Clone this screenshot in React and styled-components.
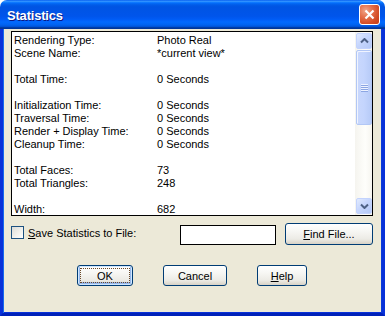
import React from 'react';
import styled, { createGlobalStyle } from 'styled-components';

const GlobalStyle = createGlobalStyle`
  html, body {
    margin: 0;
    padding: 0;
    background: #ffffff;
  }
  body {
    font-family: "Liberation Sans", Arial, sans-serif;
    font-size: 11px;
    color: #000;
  }
`;

const Window = styled.div`
  width: 385px;
  height: 316px;
  display: flex;
  flex-direction: column;
  box-sizing: border-box;
`;

const TitleBar = styled.div`
  height: 29px;
  flex: none;
  display: flex;
  align-items: center;
  justify-content: space-between;
  padding: 0 5px 1px 7px;
  box-sizing: border-box;
  border-radius: 7px 7px 0 0;
  background: linear-gradient(
    180deg,
    #0058ee 0%,
    #3593ff 4%,
    #288eff 6%,
    #127dff 8%,
    #036ffc 10%,
    #0262ee 14%,
    #0057e5 20%,
    #0054e3 24%,
    #0055eb 56%,
    #005bf5 66%,
    #026afe 76%,
    #0062ef 86%,
    #0052d6 92%,
    #0040ab 94%,
    #003092 100%
  );
`;

const Title = styled.span`
  color: #fff;
  font-weight: bold;
  font-size: 13px;
  letter-spacing: -0.2px;
  margin-top: 2px;
  text-shadow: 1px 1px 0 #0a1883;
`;

const CloseButton = styled.div`
  width: 21px;
  height: 21px;
  box-sizing: border-box;
  border: 1px solid #fff;
  border-radius: 3px;
  display: flex;
  align-items: center;
  justify-content: center;
  background: radial-gradient(circle at 30% 30%, #f0a78b 0%, #e5714d 35%, #d24c25 70%, #c33c17 100%);
`;

const Body = styled.div`
  flex: 1;
  display: flex;
  flex-direction: column;
  background: #ece9d8;
  border-left: 3px solid #0831d9;
  border-right: 3px solid #0831d9;
  border-bottom: 3px solid #0021b9;
  box-shadow: inset 1px 0 0 #166aee, inset -1px 0 0 #0a3bd8, inset 0 -1px 0 #0831d9;
  padding: 2px 9px 0 8px;
`;

const ListBox = styled.div`
  height: 185px;
  box-sizing: border-box;
  border: 1px solid #000;
  background: #fff;
  display: flex;
  overflow: hidden;
`;

const ListContent = styled.div`
  flex: 1;
  padding: 2px 0 0 2px;
  overflow: hidden;
`;

const Row = styled.div`
  display: grid;
  grid-template-columns: 143px 1fr;
  height: 13px;
  line-height: 13px;
  white-space: nowrap;
`;

const ScrollBar = styled.div`
  width: 17px;
  flex: none;
  display: flex;
  flex-direction: column;
  background: linear-gradient(90deg, #f5f4ef 0%, #fefefb 60%, #f6f5f0 100%);
  padding: 1px 0;
  box-sizing: border-box;
`;

const ArrowButton = styled.div`
  width: 16px;
  height: 16px;
  margin-left: 1px;
  box-sizing: border-box;
  border: 1px solid #c3d3fd;
  border-radius: 2px;
  background: linear-gradient(135deg, #e2ebfe 0%, #c6d6fd 45%, #b4c9f6 100%);
  display: flex;
  align-items: center;
  justify-content: center;
  flex: none;
`;

const Track = styled.div`
  flex: 1;
  display: flex;
  flex-direction: column;
  padding: 1px 0;
`;

const Thumb = styled.div`
  height: 75px;
  width: 16px;
  margin-left: 1px;
  box-sizing: border-box;
  border: 1px solid #b2c7f5;
  border-radius: 2px;
  background: linear-gradient(90deg, #c9d8fc 0%, #c4d5fd 50%, #b7cbf7 100%);
  box-shadow: inset 1px 1px 0 #f0f4ff;
  display: flex;
  align-items: center;
  justify-content: center;
`;

const Grip = styled.div`
  width: 7px;
  height: 8px;
  background: repeating-linear-gradient(180deg, #eef3ff 0 1px, #8ca6e3 1px 2px);
`;

const FileRow = styled.div`
  display: flex;
  align-items: center;
  gap: 9px;
  margin-top: 7px;
  height: 22px;
`;

const CheckLabel = styled.label`
  flex: 1;
  display: flex;
  align-items: center;
  gap: 4px;
  align-self: flex-start;
  margin-top: 3px;
`;

const CheckBox = styled.span`
  width: 13px;
  height: 13px;
  box-sizing: border-box;
  border: 1px solid #1c5180;
  background: linear-gradient(135deg, #dcdcd7 0%, #f2f2ee 60%, #ffffff 100%);
`;

const TextBox = styled.div`
  width: 96px;
  height: 20px;
  box-sizing: border-box;
  border: 1px solid #000;
  background: #fff;
  margin-top: 2px;
`;

const Button = styled.div`
  position: relative;
  width: ${p => p.$w}px;
  height: ${p => p.$h || 21}px;
  box-sizing: border-box;
  border: 1px solid #003c74;
  border-radius: 3px;
  display: flex;
  align-items: center;
  justify-content: center;
  background: linear-gradient(180deg, #ffffff 0%, #f7f7f4 35%, #ecebe5 75%, #d8d2c6 100%);
  box-shadow: ${p => p.$default ? 'inset 0 0 0 1px #cee7ff, inset 0 -1px 0 2px #98b8ea' : 'none'};
  flex: none;

  &::after {
    content: '';
    display: ${p => p.$focus ? 'block' : 'none'};
    position: absolute;
    inset: 2px;
    border: 1px dotted #6b4a2a;
  }
`;

const ButtonRow = styled.div`
  display: flex;
  gap: 30px;
  margin-top: 20px;
  padding-left: 66px;
`;

const U = styled.span`
  text-decoration: underline;
`;

const stats = [
  ['Rendering Type:', 'Photo Real'],
  ['Scene Name:', '*current view*'],
  ['', ''],
  ['Total Time:', '0 Seconds'],
  ['', ''],
  ['Initialization Time:', '0 Seconds'],
  ['Traversal Time:', '0 Seconds'],
  ['Render + Display Time:', '0 Seconds'],
  ['Cleanup Time:', '0 Seconds'],
  ['', ''],
  ['Total Faces:', '73'],
  ['Total Triangles:', '248'],
  ['', ''],
  ['Width:', '682'],
];

const Chevron = ({ down }) => (
  <svg width="9" height="6" viewBox="0 0 9 6">
    <path
      d={down ? 'M1 1.5 L4.5 5 L8 1.5' : 'M1 4.5 L4.5 1 L8 4.5'}
      fill="none"
      stroke="#4d6185"
      strokeWidth="2"
    />
  </svg>
);

const App = () => (
  <>
    <GlobalStyle />
    <Window>
      <TitleBar>
        <Title>Statistics</Title>
        <CloseButton>
          <svg width="13" height="13" viewBox="0 0 13 13">
            <path d="M2.5 2.5 L10.5 10.5 M10.5 2.5 L2.5 10.5" stroke="#fff" strokeWidth="2.2" />
          </svg>
        </CloseButton>
      </TitleBar>
      <Body>
        <ListBox>
          <ListContent>
            {stats.map(([label, value], i) => (
              <Row key={i}>
                <span>{label}</span>
                <span>{value}</span>
              </Row>
            ))}
          </ListContent>
          <ScrollBar>
            <ArrowButton><Chevron /></ArrowButton>
            <Track>
              <Thumb><Grip /></Thumb>
            </Track>
            <ArrowButton><Chevron down /></ArrowButton>
          </ScrollBar>
        </ListBox>
        <FileRow>
          <CheckLabel>
            <CheckBox />
            <span><U>S</U>ave Statistics to File:</span>
          </CheckLabel>
          <TextBox />
          <Button $w={88} $h={22}><span><U>F</U>ind File...</span></Button>
        </FileRow>
        <ButtonRow>
          <Button $w={56} $default $focus>OK</Button>
          <Button $w={64}>Cancel</Button>
          <Button $w={50}><span><U>H</U>elp</span></Button>
        </ButtonRow>
      </Body>
    </Window>
  </>
);

export default App;
